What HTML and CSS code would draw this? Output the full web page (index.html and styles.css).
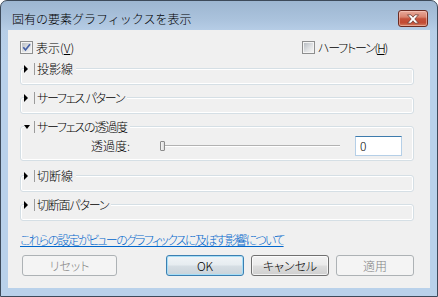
FILE: index.html
```html
<!DOCTYPE html>
<html lang="ja">
<head>
<meta charset="utf-8">
<title>固有の要素グラフィックスを表示</title>
<link rel="stylesheet" href="styles.css">
</head>
<body>
<div class="window">
  <div class="titlebar">
    <span class="title">固有の要素グラフィックスを表示</span>
    <div class="close">
      <svg width="14" height="10" viewBox="0 0 14 10">
        <path d="M1.5 0.8 H5 L7 3.2 L9 0.8 H12.5 L8.8 5 L12.5 9.2 H9 L7 6.8 L5 9.2 H1.5 L5.2 5 Z" fill="#fff" stroke="#6a3b33" stroke-width="0.8" stroke-linejoin="round"/>
      </svg>
    </div>
  </div>
  <div class="client">
    <div class="toprow">
      <label class="check">
        <span class="cb">
          <svg width="9" height="9" viewBox="0 0 9 9"><path d="M1.3 4.3 L3.5 7 L8 1.3" fill="none" stroke="#4560a6" stroke-width="1.7"/></svg>
        </span>
        <span>表示(<u>V</u>)</span>
      </label>
      <label class="check">
        <span class="cb"></span>
        <span class="kana">ハーフトーン(<u>H</u>)</span>
      </label>
    </div>

    <fieldset class="group first">
      <legend><span class="arrow right"></span><span class="sep"></span><span>投影線</span></legend>
    </fieldset>

    <fieldset class="group">
      <legend><span class="arrow right"></span><span class="sep"></span><span class="kana">サーフェス パターン</span></legend>
    </fieldset>

    <fieldset class="group open">
      <legend><span class="arrow down"></span><span class="sep"></span><span class="kana">サーフェスの透過度</span></legend>
      <div class="row">
        <span class="rowlabel">透過度:</span>
        <div class="slider"><span class="thumb"></span><span class="track"></span></div>
        <div class="input">0</div>
      </div>
    </fieldset>

    <fieldset class="group after-open">
      <legend><span class="arrow right"></span><span class="sep"></span><span>切断線</span></legend>
    </fieldset>

    <fieldset class="group">
      <legend><span class="arrow right"></span><span class="sep"></span><span class="kana">切断面パターン</span></legend>
    </fieldset>

    <a class="link" href="#">これらの設定がビューのグラフィックスに及ぼす影響について</a>

    <div class="buttons">
      <button class="btn reset" disabled>リセット</button>
      <button class="btn ok default">OK</button>
      <button class="btn">キャンセル</button>
      <button class="btn" disabled>適用</button>
    </div>
  </div>
</div>
</body>
</html>
```
FILE: styles.css
```css
html, body {
  margin: 0;
  background: #ffffff;
}
body {
  font-family: "Noto Sans CJK JP", sans-serif;
  font-weight: 300;
  font-size: 12px;
  color: #000;
}
.window {
  width: 438px;
  height: 297px;
  box-sizing: border-box;
  border: 1px solid #3d4a5a;
  border-radius: 7px 7px 0 0;
  background: linear-gradient(#9db6d1 0px, #aac2dc 18px, #b7cee7 30px, #b9d1ea 60px, #b9d1ea 100%);
  display: flex;
  flex-direction: column;
}
.titlebar {
  height: 29px;
  box-sizing: border-box;
  padding: 9px 9px 0 11px;
  display: flex;
  align-items: flex-start;
  justify-content: space-between;
}
.title {
  line-height: 17px;
  font-size: 12px;
}
.close {
  width: 30px;
  height: 17px;
  box-sizing: border-box;
  border: 1px solid #6b2b22;
  border-radius: 3px;
  background: linear-gradient(#e9aa9b 0%, #d98470 40%, #c4513b 52%, #c24a33 78%, #d58064 100%);
  box-shadow: inset 0 0 0 1px rgba(255, 220, 210, 0.45);
  display: flex;
  align-items: center;
  justify-content: center;
}
.client {
  flex: 1;
  margin: 0 7px 8px 7px;
  background: #f0f0f0;
  padding: 11px 16px 0 12px;
  display: flex;
  flex-direction: column;
  font-feature-settings: "palt";
}
.kana {
  letter-spacing: -1.2px;
}
.toprow {
  display: grid;
  grid-template-columns: 282px auto;
  height: 13px;
  align-items: center;
}
.check {
  display: flex;
  align-items: center;
  gap: 3px;
  line-height: 13px;
  white-space: nowrap;
}
.cb {
  width: 13px;
  height: 13px;
  box-sizing: border-box;
  border: 1px solid #8e8f8f;
  padding: 1px;
  background: linear-gradient(135deg, #b9bec4 0%, #dfe1e3 55%, #f4f4f4 100%) content-box, #f4f4f4;
  display: flex;
}
.cb svg {
  display: block;
}
.group {
  margin: 6px 0 0 0;
  padding: 0 0 9px 3px;
  border: 1px solid #d5dfe5;
  border-radius: 3px;
  box-shadow: inset 0 0 0 1px #ffffff;
  min-width: 0;
}
.group.first {
  margin-top: 8px;
}
.group.open {
  padding-bottom: 4px;
}
.group.after-open {
  margin-top: 8px;
}
.group legend {
  padding: 0 3px 0 0;
  height: 13px;
  line-height: 13px;
  display: flex;
  align-items: center;
  background: #f0f0f0;
  white-space: nowrap;
}
.arrow {
  width: 0;
  height: 0;
}
.arrow.right {
  border-left: 4px solid #000;
  border-top: 4px solid transparent;
  border-bottom: 4px solid transparent;
  margin-right: 6px;
}
.arrow.down {
  border-top: 4px solid #000;
  border-left: 3px solid transparent;
  border-right: 3px solid transparent;
  margin-right: 4px;
}
.sep {
  width: 1px;
  height: 12px;
  background: #9b9b9b;
  margin-right: 2px;
}
.row {
  display: flex;
  align-items: center;
  margin-top: 3px;
  height: 20px;
}
.rowlabel {
  width: 106px;
  text-align: right;
  line-height: 14px;
}
.slider {
  width: 180px;
  margin-left: 30px;
  display: flex;
  align-items: center;
}
.thumb {
  width: 5px;
  height: 10px;
  box-sizing: border-box;
  border: 1px solid #8c8c8c;
  border-radius: 1px;
  background: linear-gradient(90deg, #f6f6f6, #dcdcdc);
}
.track {
  flex: 1;
  height: 1px;
  background: #b2b2b2;
  border-bottom: 1px solid #ffffff;
}
.input {
  width: 47px;
  height: 20px;
  box-sizing: border-box;
  margin-left: 15px;
  border: 1px solid #b5cfe7;
  border-top-color: #3d7bad;
  background: #fff;
  padding-left: 4px;
  line-height: 18px;
}
.link {
  margin-top: 11px;
  line-height: 16px;
  color: #0066cc;
  text-decoration: underline;
  letter-spacing: -1.7px;
  align-self: flex-start;
}
.buttons {
  display: flex;
  gap: 7px;
  margin-top: 7px;
}
.btn {
  width: 78px;
  height: 21px;
  box-sizing: border-box;
  padding: 0;
  font-family: "Noto Sans CJK JP", sans-serif;
  font-weight: 300;
  font-feature-settings: "palt";
  font-size: 12px;
  line-height: 19px;
  color: #000;
  border: 1px solid #707070;
  border-radius: 3px;
  background: linear-gradient(#f2f2f2 0%, #ebebeb 48%, #dddddd 52%, #cfcfcf 100%);
  box-shadow: inset 0 0 0 1px rgba(255, 255, 255, 0.7);
}
.btn:disabled {
  border-color: #adb2b5;
  background: #f4f4f4;
  color: #838383;
  box-shadow: none;
}
.btn.reset {
  width: 95px;
  margin-left: 2px;
}
.btn.ok {
  margin-left: auto;
}
.btn.default {
  border-color: #3c7fb1;
  box-shadow: inset 0 0 0 1px #a6def7;
  background: linear-gradient(#f0f4f7 0%, #e6ecf0 48%, #d6dee4 52%, #c9d3da 100%);
}
```
